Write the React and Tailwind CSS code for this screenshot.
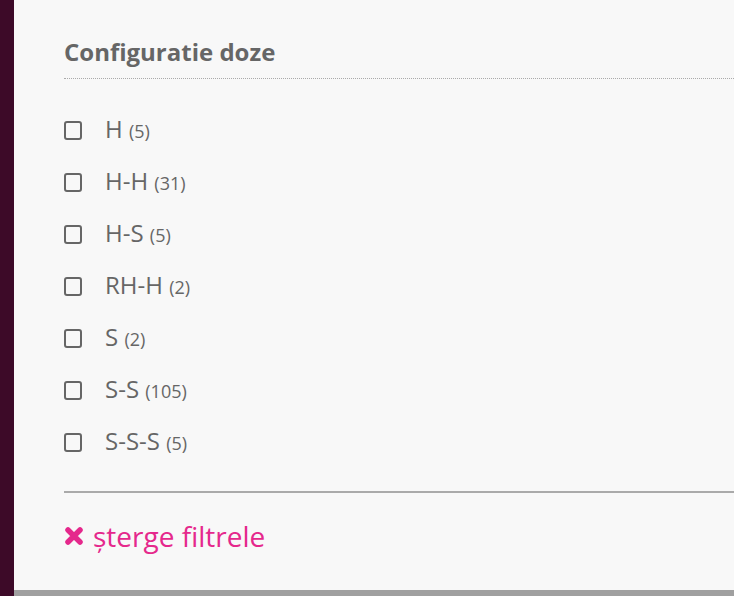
import React from "react";

const items = [
  ["H", 5],
  ["H-H", 31],
  ["H-S", 5],
  ["RH-H", 2],
  ["S", 2],
  ["S-S", 105],
  ["S-S-S", 5],
];

export default function App() {
  return (
    <div className="flex h-[596px] w-[754px] bg-white" style={{ fontFamily: '"Open Sans", sans-serif' }}>
      <div className="w-[14px] shrink-0 bg-[#3d0a28]" />
      <div className="flex w-[720px] flex-col bg-[#f8f8f8]">
        <div className="flex-1 pl-[50px] pt-[36px]">
          <h2 className="text-[24px] font-bold leading-[32px] text-[#666]">Configuratie doze</h2>
          <div className="mt-[10px] border-b border-dotted border-[#aaa]" />
          <ul className="mt-[36px] flex flex-col gap-[22px]">
            {items.map(([l, c]) => (
              <li key={l} className="flex h-[30px] items-center">
                <span className="h-[19px] w-[18px] rounded-[3px] border-2 border-[#666]" />
                <span className="ml-[23px] text-[24px] leading-[30px] text-[#666]">
                  {l} <span className="text-[18px]">({c})</span>
                </span>
              </li>
            ))}
          </ul>
          <div className="mt-[34px] h-[2px] bg-[#aaa]" />
          <div className="mt-[25px] flex items-center text-[28px] leading-[36px] text-[#e5288c]">
            <svg width="20" height="20" viewBox="0 0 20 20" className="mr-[9px]">
              <path d="M4 4 L16 16 M16 4 L4 16" stroke="#e5288c" strokeWidth="5.5" strokeLinecap="round" />
            </svg>
            <span>șterge filtrele</span>
          </div>
        </div>
        <div className="h-[6px] bg-[#a0a0a0]" />
      </div>
      <div className="flex-1 bg-white" />
    </div>
  );
}
